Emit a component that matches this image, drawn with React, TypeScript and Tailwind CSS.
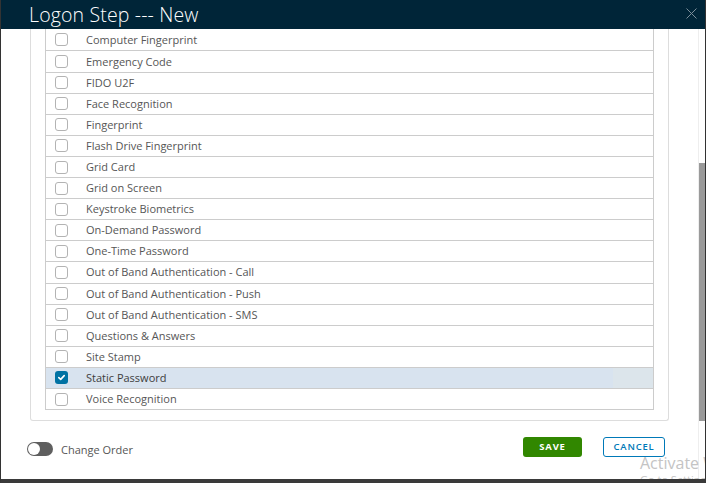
import React from "react";

const items = [
  "Computer Fingerprint",
  "Emergency Code",
  "FIDO U2F",
  "Face Recognition",
  "Fingerprint",
  "Flash Drive Fingerprint",
  "Grid Card",
  "Grid on Screen",
  "Keystroke Biometrics",
  "On-Demand Password",
  "One-Time Password",
  "Out of Band Authentication - Call",
  "Out of Band Authentication - Push",
  "Out of Band Authentication - SMS",
  "Questions & Answers",
  "Site Stamp",
  "Static Password",
  "Voice Recognition",
];

function Checkbox({ checked }: { checked: boolean }) {
  if (checked) {
    return (
      <div className="w-[13px] h-[13px] rounded-[3px] bg-[#0072a3] flex items-center justify-center shrink-0">
        <svg width="9" height="9" viewBox="0 0 9 9">
          <path d="M1.8 4.6 L3.7 6.4 L7.2 2.6" stroke="white" strokeWidth="1.6" fill="none" strokeLinecap="round" strokeLinejoin="round" />
        </svg>
      </div>
    );
  }
  return <div className="w-[13px] h-[13px] rounded-[3px] border border-[#b3b3b3] bg-white shrink-0" />;
}

export default function App() {
  return (
    <div
      className="w-[706px] h-[483px] relative overflow-hidden bg-white flex flex-col border-l border-r border-[#333] border-b-[4px] border-b-[#3a3a3a]"
      style={{ fontFamily: '"Open Sans", "Liberation Sans", sans-serif' }}
    >
      {/* Header */}
      <div className="h-[29px] bg-[#002538] flex items-center justify-between shrink-0 pl-[28px] pr-[8px]">
        <div className="text-[19.5px] font-light text-white leading-none tracking-[0.15px]">Logon Step --- New</div>
        <svg width="11" height="11" viewBox="0 0 11 11" className="mb-[2px]">
          <path d="M0.5 0.5 L10.5 10.5 M10.5 0.5 L0.5 10.5" stroke="#7d8e99" strokeWidth="1" />
        </svg>
      </div>

      {/* Body */}
      <div className="flex-1 flex flex-row min-h-0">
        <div className="flex-1 flex flex-col min-w-0">
          {/* Card */}
          <div className="ml-[29px] w-[639px] border-l border-r border-b border-[#dddddd] rounded-b-[3px] px-[14px] pb-[10px]">
            <div className="border-l border-r border-b border-[#cccccc] pt-[0.4px]">
              {items.map((label) => {
                const sel = label === "Static Password";
                return (
                  <div
                    key={label}
                    className={
                      "h-[21.1px] flex items-center border-t first:border-t-0 border-[#cccccc] " +
                      (sel ? "bg-[#d8e3ef]" : "bg-white")
                    }
                  >
                    <div className="flex items-center flex-1 pl-[9px]">
                      <Checkbox checked={sel} />
                      <span className={"ml-[18px] text-[11px] leading-none mb-[1px] " + (sel ? "text-[#3d3d3d]" : "text-[#565656]")}>
                        {label}
                      </span>
                    </div>
                    {sel && <div className="w-[40px] self-stretch bg-[#dce5eb]" />}
                  </div>
                );
              })}
            </div>
          </div>

          {/* Footer */}
          <div className="flex items-start mt-[16px] pl-[26px] pr-[33px]">
            <div className="flex items-center mt-[5px]">
              <div className="w-[26px] h-[14px] rounded-full bg-[#5f5f5f] flex items-center pl-[1px]">
                <div className="w-[12px] h-[12px] rounded-full bg-white" />
              </div>
              <span className="ml-[8px] text-[11px] text-[#565656] leading-none">Change Order</span>
            </div>
            <div className="flex-1" />
            <button className="w-[59px] h-[20px] rounded-[3px] bg-[#318700] text-white text-[9.5px] font-bold tracking-[0.8px] flex items-center justify-center">
              SAVE
            </button>
            <button className="ml-[21px] w-[62px] h-[20px] rounded-[3px] border border-[#0079b8] bg-white text-[#0079b8] text-[9.5px] font-semibold tracking-[0.8px] flex items-center justify-center">
              CANCEL
            </button>
          </div>
        </div>

        {/* Scrollbar */}
        <div className="w-[7px] border-l border-[#eeeeee] flex flex-col bg-white">
          <div className="h-[134px]" />
          <div className="h-[258px] bg-[#9a9a9a]" />
        </div>
      </div>

      {/* Windows watermark */}
      <div className="absolute left-[639px] top-[455px] text-[#c4c4c4] leading-none whitespace-nowrap pointer-events-none">
        <div className="text-[16px]">Activate Windows</div>
        <div className="text-[11px] mt-[3px]">Go to Settings to activate Windows.</div>
      </div>
    </div>
  );
}
